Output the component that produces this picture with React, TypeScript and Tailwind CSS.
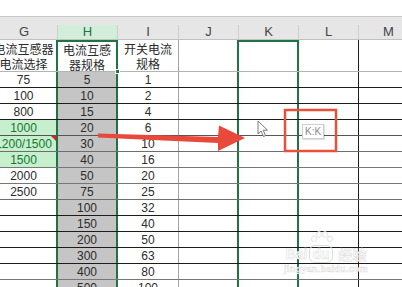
import React from "react";

// Spreadsheet excerpt: columns G..M, H and K selected

const FONT = "font-['Liberation_Sans','Noto_Sans_CJK_SC',sans-serif]";
const CJK = "font-['Noto_Sans_CJK_SC',sans-serif]";

interface Row {
    g?: string;
    h: string;
    i: string;
    good?: boolean;
    note?: boolean;
    line: string;
}

const rows: Row[] = [
    { g: "75", h: "5", i: "1", line: "border-b-[#1c1c1c]" },
    { g: "100", h: "10", i: "2", line: "border-b-[#1c1c1c]" },
    { g: "800", h: "15", i: "4", line: "border-b-[#1c1c1c]" },
    { g: "1000", h: "20", i: "6", good: true, line: "border-b-[#555]" },
    { g: "1200/1500", h: "30", i: "10", good: true, note: true, line: "border-b-[#6e6e6e]" },
    { g: "1500", h: "40", i: "16", good: true, line: "border-b-[#777]" },
    { g: "2000", h: "50", i: "20", line: "border-b-[#777]" },
    { g: "2500", h: "75", i: "25", line: "border-b-[#6e6e6e]" },
    { h: "100", i: "32", line: "border-b-[#1c1c1c]" },
    { h: "150", i: "40", line: "border-b-[#1c1c1c]" },
    { h: "200", i: "50", line: "border-b-[#1c1c1c]" },
    { h: "300", i: "63", line: "border-b-[#1c1c1c]" },
    { h: "400", i: "80", line: "border-b-[#777]" },
    { h: "500", i: "100", line: "border-b-[#1c1c1c]" },
];

const headers = [
    { label: "G", cls: "w-[67px] border-r border-r-[#cfcfcf] text-[#444]" },
    { label: "H", cls: "w-[60px] border-r border-r-[#cfcfcf] bg-[#d2eedb] text-[#217346]" },
    { label: "I", cls: "w-[61px] border-r border-r-[#cfcfcf] text-[#444]" },
    { label: "J", cls: "w-[60px] border-r border-r-[#cfcfcf] text-[#444]" },
    { label: "K", cls: "w-[60px] border-r border-r-[#cfcfcf] text-[#444]" },
    { label: "L", cls: "w-[60px] border-r border-r-[#cfcfcf] text-[#444]" },
    { label: "M", cls: "w-[60px] border-r border-r-[#cfcfcf] text-[#444]" },
];

const G = "w-[67px] shrink-0 border-r-2 border-r-[#217346]";
const H = "w-[60px] shrink-0 border-r-2 border-r-[#217346]";
const I = "w-[61px] shrink-0 border-r border-r-[#a3a3a3]";
const J = "w-[60px] shrink-0 border-r-2 border-r-[#217346]";
const K = "w-[60px] shrink-0 border-r-2 border-r-[#217346]";
const L = "w-[60px] shrink-0 border-r border-r-[#1c1c1c]";
const M = "w-[60px] shrink-0 border-r border-r-[#1c1c1c]";

function Watermark() {
    return (
        <div className="absolute left-[284px] top-[247px] flex flex-col items-center pointer-events-none">
            <div className="flex items-end gap-[2px] text-[14px] font-bold leading-none text-white [-webkit-text-stroke:0.5px_#dadada]">
                <span>Bai</span>
                <span className="relative">
                    <svg width="24" height="16" viewBox="0 0 24 16" className="absolute -top-[17px] left-[1px]">
                        <g fill="#fff" stroke="#dadada" strokeWidth="0.8">
                            <ellipse cx="4" cy="9" rx="2.4" ry="3" />
                            <ellipse cx="9" cy="4.5" rx="2.4" ry="3" />
                            <ellipse cx="15" cy="4.5" rx="2.4" ry="3" />
                            <ellipse cx="20" cy="9" rx="2.4" ry="3" />
                        </g>
                    </svg>
                    <span className="rounded-[6px] border border-[#dcdcdc] px-[2px]">du</span>
                </span>
                <span className={`${CJK} ml-[4px]`}>经验</span>
            </div>
            <div className="mt-[4px] text-[9px] font-bold leading-none text-white [-webkit-text-stroke:0.4px_#d4d4d4] tracking-[0.3px]">
                jingyan.baidu.com
            </div>
        </div>
    );
}

export default function App() {
    return (
        <div className={`relative w-[402px] h-[287px] overflow-hidden bg-white ${FONT}`}>
            <div className="h-[16px] bg-white" />
            <div className="h-[9px] bg-[#e6e6e6] border-t border-t-[#c9c9c9]" />

            <div className="-ml-[9px] flex flex-col">
                {/* column letters */}
                <div className="flex h-[15px] bg-[#e6e6e6] border-b border-b-[#c2c2c2]">
                    {headers.map((h) => (
                        <div key={h.label} className={`${h.cls} shrink-0 flex items-end justify-center text-[13px] leading-none pb-[1px]`}>
                            {h.label}
                        </div>
                    ))}
                </div>

                {/* two-line titles */}
                <div className={`flex h-[32px] border-b border-b-[#b3b3b3] text-[12px] leading-[15px] text-[#2a2a2a] ${CJK}`}>
                    <div className={`${G} flex flex-col items-center justify-center whitespace-nowrap pt-[1px]`}>
                        <span>电流互感器</span>
                        <span>电流选择</span>
                    </div>
                    <div className={`${H} relative flex flex-col items-center justify-center border-t-2 border-t-[#217346]`}>
                        <span>电流互感</span>
                        <span>器规格</span>
                        <span className="absolute -right-[4px] -bottom-[3px] w-[5px] h-[5px] bg-[#217346] border border-white" />
                    </div>
                    <div className={`${I} flex flex-col items-center justify-center pt-[1px]`}>
                        <span>开关电流</span>
                        <span>规格</span>
                    </div>
                    <div className={J} />
                    <div className={`${K} border-t-2 border-t-[#217346]`} />
                    <div className={L} />
                    <div className={M} />
                </div>

                {rows.map((r, idx) => (
                    <div key={idx} className={`flex h-[16px] border-b ${r.line} text-[12px] leading-none text-[#2c2c2c]`}>
                        <div
                            className={`${G} relative flex items-center justify-center whitespace-nowrap pt-[1px] ${
                                r.good ? "bg-[#c6efce] text-[#16772e]" : ""
                            }`}
                        >
                            {r.g}
                            {r.note && (
                                <span className="absolute right-0 top-0 w-0 h-0 border-l-[5px] border-l-transparent border-t-[5px] border-t-[#e0201a]" />
                            )}
                        </div>
                        <div className={`${H} flex items-center justify-center bg-[#c5c5c5] pt-[1px]`}>{r.h}</div>
                        <div className={`${I} flex items-center justify-center pt-[1px]`}>{r.i}</div>
                        <div className={J} />
                        <div className={K} />
                        <div className={L} />
                        <div className={M} />
                    </div>
                ))}
            </div>

            {/* red arrow and highlight box */}
            <svg className="absolute left-0 top-0 pointer-events-none" width="402" height="287">
                <polygon
                    points="98,133.5 218,137 219,125.5 245,138 218,151 218,143 98,137.5"
                    fill="#e8493a"
                />
                <rect x="285" y="110" width="51" height="41" fill="none" stroke="#e8503a" strokeWidth="2.5" />
            </svg>

            {/* mouse pointer */}
            <svg className="absolute left-[257px] top-[120px] pointer-events-none" width="13" height="18" viewBox="0 0 13 18">
                <path d="M1 1 L1 14 L4 11 L6.5 16.5 L8.5 15.6 L6.2 10.2 L10.5 10.2 Z" fill="#fff" stroke="#7a7a7a" strokeWidth="1" strokeLinejoin="round" />
            </svg>

            {/* column range tooltip */}
            <div className="absolute left-[302px] top-[124px] h-[15px] px-[2px] flex items-center border border-[#cfcfcf] bg-white text-[10px] leading-none text-[#8a8a8a] shadow-[1px_1px_1px_rgba(0,0,0,0.12)]">
                K:K
            </div>

            <Watermark />
        </div>
    );
}
